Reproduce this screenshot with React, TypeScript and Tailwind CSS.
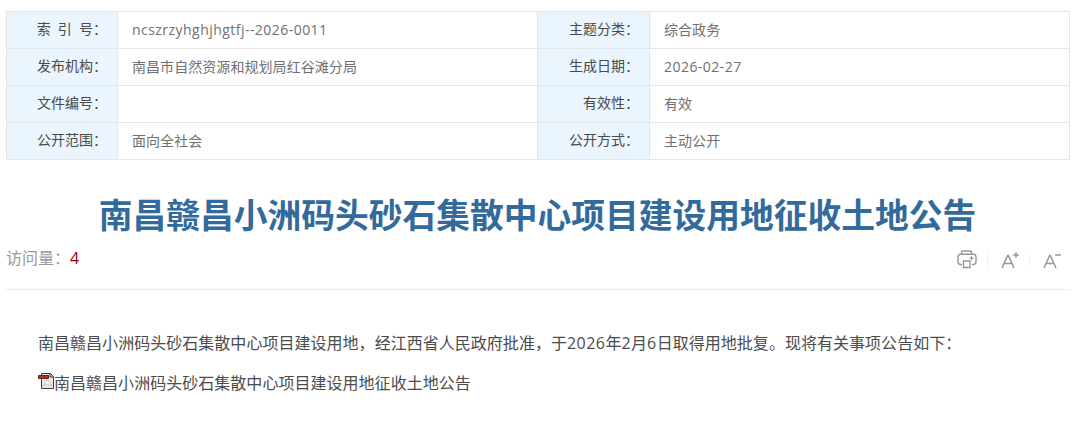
const infoRows = [
    { label: '索 引 号：', value: 'ncszrzyhghjhgtfj--2026-0011', label2: '主题分类：', value2: '综合政务' },
    { label: '发布机构：', value: '南昌市自然资源和规划局红谷滩分局', label2: '生成日期：', value2: '2026-02-27' },
    { label: '文件编号：', value: '', label2: '有效性：', value2: '有效' },
    { label: '公开范围：', value: '面向全社会', label2: '公开方式：', value2: '主动公开' },
];

const PrintIcon = () => (
    <svg width="20" height="19" viewBox="0 0 20 19" fill="none" stroke="#969696" strokeWidth="1.4">
        <path d="M4.5 4V2.2Q4.5 1 5.7 1h7.6q1.2 0 1.2 1.2V4" />
        <path d="M5 14.5H3.7Q1 14.5 1 11.8V7Q1 4.3 3.7 4.3h12.6Q19 4.3 19 7v4.8q0 2.7-2.7 2.7H15" />
        <path d="M6.5 11h6.5v6.5h-6.5z" />
        <path d="M12.5 8.2h4M14.5 6.2v4" strokeWidth="1.2" />
    </svg>
);

const FontSizeIcon = ({ plus = false }: { plus?: boolean }) => (
    <svg width="18" height="18" viewBox="0 0 18 18" fill="none" stroke="#969696" strokeWidth="1.5">
        <path d="M1 17 6.7 4.5h.6L13 17M3.2 12.5h7.6" />
        <path d="M12.2 4h5.6" />
        {plus && <path d="M15 1.2v5.6" />}
    </svg>
);

const PdfIcon = () => (
    <svg width="16" height="16" viewBox="0 0 16 16" className="mb-1 shrink-0">
        <path d="M3.5.5h9l3 3v12h-12z" fill="#e8e7e5" stroke="#453c38" />
        <path d="M12 .5V4h3.5" fill="#d6b795" stroke="#453c38" />
        <path d="m5 13 4-6 5 6-5-2z" fill="#fff" stroke="#bcbcbc" strokeWidth=".8" />
        <path d="M.5 2.5h10v3H.5z" fill="#b52e20" stroke="#702018" />
    </svg>
);

const LabelCell = ({ text }: { text: string }) => (
    <div className="flex items-center justify-end whitespace-pre border-r border-b border-[#dfe7ec] bg-[#eaf5fe] pr-[10px] pb-0.5 text-[#4a4a4a] [word-spacing:3.5px]">
        {text}
    </div>
);

const ValueCell = ({ text }: { text: string }) => (
    <div
        className={`flex items-center border-r border-b border-[#e6e6e6] pl-3.5 text-[#707070] ${
            /\d/.test(text) ? 'tracking-[0.46px]' : 'tracking-[0.06px]'
        }`}
    >
        {text}
    </div>
);

const Num = ({ children }: { children: string }) => <span className="tracking-[0.45px]">{children}</span>;

export default function App() {
    return (
        <div className="h-[422px] overflow-hidden bg-white px-1.5 pt-[11px] font-['Open_Sans','Noto_Sans_CJK_SC',sans-serif]">
            <div className="w-[1064px] border-t border-l border-[#e3e6e8] text-sm">
                {infoRows.map((row) => (
                    <div key={row.label} className="grid h-[37px] grid-cols-[111px_420px_112px_420px]">
                        <LabelCell text={row.label} />
                        <ValueCell text={row.value} />
                        <LabelCell text={row.label2} />
                        <ValueCell text={row.value2} />
                    </div>
                ))}
            </div>

            <h1 className="mt-8 pr-[5px] text-center text-[33.75px] leading-[46px] font-bold whitespace-nowrap text-[#336a9c]">
                南昌赣昌小洲码头砂石集散中心项目建设用地征收土地公告
            </h1>

            <div className="flex h-[52px] w-[1065px] items-start justify-between border-b border-[#ebebeb]">
                <div className="pt-2 text-base leading-6 text-[#999]">
                    访问量：<span className="text-[#900]">4</span>
                </div>
                <div className="flex items-center pt-3 pr-[10px]">
                    <PrintIcon />
                    <span className="mr-[13px] ml-2.5 h-3 w-px bg-[#eee]" />
                    <FontSizeIcon plus />
                    <span className="mr-[13px] ml-2.5 h-3 w-px bg-[#eee]" />
                    <FontSizeIcon />
                </div>
            </div>

            <div className="pt-[33px] pl-8 text-base leading-10 tracking-[0.03px] text-[#4c4c4c]">
                <p className="whitespace-nowrap">
                    南昌赣昌小洲码头砂石集散中心项目建设用地，经江西省人民政府批准，于<Num>2026</Num>年<Num>2</Num>月<Num>6</Num>
                    日取得用地批复。现将有关事项公告如下：
                </p>
                <p className="flex items-center">
                    <PdfIcon />
                    南昌赣昌小洲码头砂石集散中心项目建设用地征收土地公告
                </p>
            </div>
        </div>
    );
}
